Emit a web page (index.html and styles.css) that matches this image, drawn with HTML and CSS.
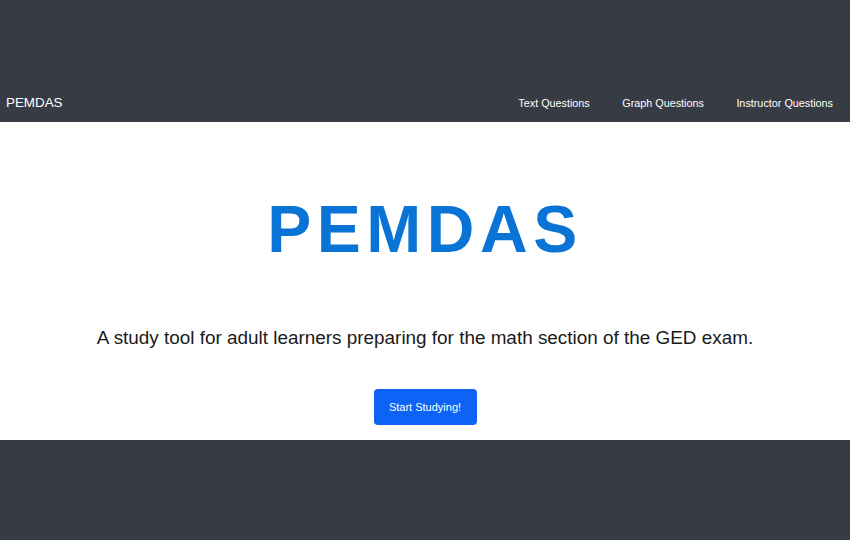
FILE: index.html
```html
<!DOCTYPE html>
<html lang="en">
<head>
<meta charset="utf-8">
<title>PEMDAS</title>
<link rel="stylesheet" href="styles.css">
</head>
<body>
<header class="topbar">
  <nav class="nav">
    <a class="brand" href="#">PEMDAS</a>
    <ul class="links">
      <li><a href="#">Text Questions</a></li>
      <li><a href="#">Graph Questions</a></li>
      <li><a href="#">Instructor Questions</a></li>
    </ul>
  </nav>
</header>
<main class="hero">
  <h1 class="title">PEMDAS</h1>
  <p class="lead">A study tool for adult learners preparing for the math section of the GED exam.</p>
  <a class="btn" href="#">Start Studying!</a>
</main>
<footer class="bottom"></footer>
</body>
</html>
```
FILE: styles.css
```css
* { box-sizing: border-box; }
html, body { margin: 0; padding: 0; }
body {
  background: #373b43;
  font-family: "Liberation Sans", Arial, sans-serif;
  height: 540px;
  overflow: hidden;
}
.topbar {
  height: 122px;
  display: flex;
  align-items: flex-end;
}
.nav {
  width: 100%;
  height: 40px;
  display: flex;
  align-items: center;
  justify-content: space-between;
  padding: 0 17px 0 6px;
}
.brand {
  color: #fff;
  text-decoration: none;
  font-size: 13.4px;
}
.links {
  list-style: none;
  margin: 0;
  padding: 0;
  display: flex;
  gap: 32.5px;
}
.links a {
  color: #fff;
  text-decoration: none;
  font-size: 10.8px;
}
.hero {
  background: #fff;
  height: 318px;
  display: flex;
  flex-direction: column;
  align-items: center;
}
.title {
  margin: 67px 0 0;
  font-size: 66px;
  line-height: 80px;
  letter-spacing: 5.5px;
  color: #0a74d6;
  font-weight: bold;
}
.lead {
  margin: 56px 0 0;
  font-size: 18.9px;
  line-height: 26px;
  color: #1a1a1a;
}
.btn {
  margin-top: 38px;
  width: 103px;
  height: 36px;
  background: #0d63f5;
  color: #fff;
  text-decoration: none;
  font-size: 11px;
  border-radius: 4px;
  display: flex;
  align-items: center;
  justify-content: center;
}
```
